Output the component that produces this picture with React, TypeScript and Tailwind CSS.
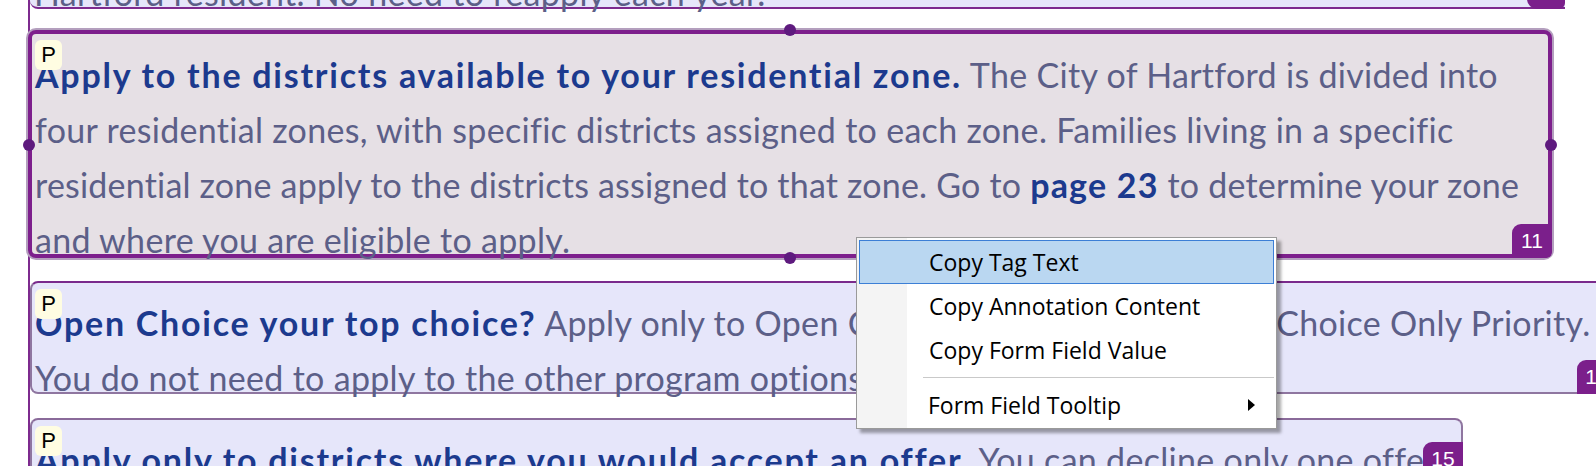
import React from "react";

const bold = "font-bold tracking-[1.75px] text-[#1c3a8e]";
const body = "text-[#5c5f88] tracking-[0.3px]";

function PBadge() {
    return (
        <div className="absolute left-[3px] top-[6px] z-10 flex h-[30px] w-[27px] items-center justify-center rounded-[6px] bg-[#fffde2] text-[22px] leading-none tracking-normal text-black [font-family:'Liberation_Sans',sans-serif]">
            P
        </div>
    );
}

function Handle({ className }: { className: string }) {
    return <div className={`absolute z-20 h-[12px] w-[12px] rounded-full bg-[#5e1a7e] ${className}`} />;
}

function CountBadge({ n, className }: { n: string; className: string }) {
    return (
        <div
            className={`absolute z-10 flex items-center justify-center rounded-tl-[9px] rounded-br-[6px] bg-[#7b1f8b] text-[21px] tracking-normal text-white [font-family:'Liberation_Sans',sans-serif] ${className}`}
        >
            {n}
        </div>
    );
}

function ContextMenu() {
    const items = ["Copy Tag Text", "Copy Annotation Content", "Copy Form Field Value"];
    return (
        <div className="absolute left-[856px] top-[237px] z-30 w-[421px] border border-[#9a9a9a] bg-white shadow-[4px_4px_3px_rgba(0,0,0,0.35)] [font-family:'Open_Sans',sans-serif]">
            <div className="relative p-[2px]">
                <div className="absolute bottom-0 left-0 top-0 w-[50px] bg-[#f4f4f4]" />
                {items.map((label, i) => (
                    <div
                        key={label}
                        className={`relative flex h-[44px] items-center pl-[69px] text-[23px] text-black ${
                            i === 0 ? "border border-[#3c7fd6] bg-[#bad7f1]" : "border border-transparent"
                        }`}
                    >
                        {label}
                    </div>
                ))}
                <div className="relative my-[5px] ml-[64px] h-[2px] border-t border-[#c9c9c9] bg-white" />
                <div className="relative flex h-[42px] items-center justify-between pl-[69px] pr-[18px] text-[23px] text-black">
                    <span>Form Field Tooltip</span>
                    <svg width="8" height="12" viewBox="0 0 8 12">
                        <path d="M0 0 L7 6 L0 12 Z" fill="#000" />
                    </svg>
                </div>
            </div>
        </div>
    );
}

export default function App() {
    return (
        <div className="relative h-[466px] w-[1596px] overflow-hidden bg-white [font-family:Lato,'Open_Sans',sans-serif]">
            <div className="ml-[28px] flex min-h-[520px] flex-col border-l-2 border-[#7d2a8e]">
                {/* previous tag, mostly scrolled out */}
                <div className="relative -mt-[41px] h-[50px] w-[1535px] rounded-bl-[8px] border-b-2 border-[#7d2a8e] bg-[#e6e6fa] pl-[4px] pt-[6px]">
                    <div className={`whitespace-nowrap text-[34px] leading-[55px] ${body}`}>
                        Hartford resident. No need to reapply each year.
                    </div>
                    <CountBadge n="10" className="-bottom-[2px] right-0 h-[36px] w-[38px] rounded-b-[10px]" />
                </div>

                {/* selected tag */}
                <div className="relative -ml-[2px] mt-[21px] h-[228px] w-[1524px] rounded-[8px] border-4 border-[#7d1f8c] bg-[#e6e0e5] pl-[3px] pt-[13px] shadow-[0_0_0_2px_#b49fbe]">
                    <PBadge />
                    <div className={`whitespace-nowrap text-[34px] leading-[55px] ${body}`}>
                        <span className="block">
                            <span className={bold}>Apply to the districts available to your residential zone.</span> The City of Hartford is divided into
                        </span>
                        <span className="block">
                            four residential zones, with specific districts assigned to each zone. Families living in a specific
                        </span>
                        <span className="block tracking-[0.2px]">
                            residential zone apply to the districts assigned to that zone. Go to{" "}
                            <span className="font-bold tracking-[1.2px] text-[#1c3a8e]">page 23</span> to determine your zone
                        </span>
                        <span className="block">and where you are eligible to apply.</span>
                    </div>
                    <CountBadge n="11" className="-bottom-[4px] -right-[4px] h-[34px] w-[40px]" />
                    <Handle className="-top-[10px] left-[752px]" />
                    <Handle className="-bottom-[10px] left-[752px]" />
                    <Handle className="-left-[9px] top-[105px]" />
                    <Handle className="-right-[9px] top-[105px]" />
                </div>

                {/* next tags */}
                <div className="relative mt-[23px] h-[113px] w-[1590px] rounded-[8px] border-2 border-[#8f76a0] border-t-[#7a2a8c] bg-[#e6e6fa] pl-[3px] pt-[12px]">
                    <PBadge />
                    <div className={`whitespace-nowrap text-[34px] leading-[55px] ${body}`}>
                        <span className="block">
                            <span className={bold}>Open Choice your top choice?</span> Apply only to Open Choice and select the Open Choice Only Priority.
                        </span>
                        <span className="block">You do not need to apply to the other program options.</span>
                    </div>
                    <CountBadge n="14" className="-bottom-[2px] right-[1px] h-[34px] w-[40px]" />
                </div>

                <div className="relative mt-[24px] h-[80px] w-[1433px] rounded-[8px] border-2 border-[#8f76a0] border-t-[#8a6a9a] bg-[#e6e6fa] pl-[3px] pt-[12px]">
                    <PBadge />
                    <div className={`whitespace-nowrap text-[34px] leading-[55px] ${body}`}>
                        <span className={bold}>Apply only to districts where you would accept an offer.</span> You can decline only one offer
                    </div>
                    <CountBadge n="15" className="right-[-2px] top-[22px] h-[34px] w-[40px]" />
                </div>
            </div>

            <ContextMenu />
        </div>
    );
}
